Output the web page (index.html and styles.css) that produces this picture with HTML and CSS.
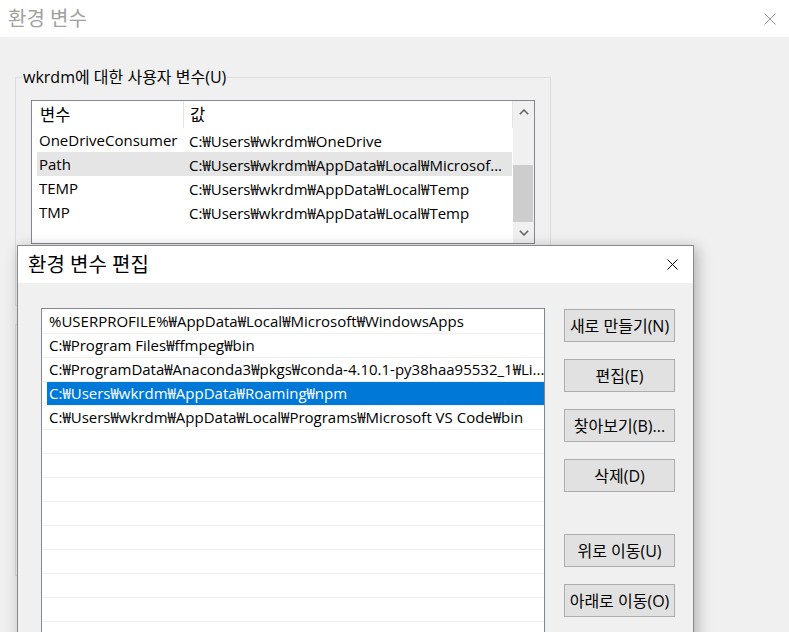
FILE: index.html
```html
<!DOCTYPE html>
<html lang="ko">
<head>
<meta charset="utf-8">
<title>환경 변수</title>
<link rel="stylesheet" href="styles.css">
</head>
<body>
<div class="bg-window">
  <div class="bg-titlebar">
    <span class="bg-title">환경 변수</span>
    <span class="close-icon">
      <svg width="12" height="12" viewBox="0 0 12 12"><path d="M0.5 0.5L11.5 11.5M11.5 0.5L0.5 11.5" stroke="#9a9a9a" stroke-width="1" fill="none"/></svg>
    </span>
  </div>
  <div class="bg-body">
    <fieldset class="group user-group">
      <legend>wkrdm에 대한 사용자 변수(U)</legend>
      <div class="lv">
        <div class="lv-main">
          <div class="lv-header">
            <div class="hcol1">변수</div>
            <div class="hcol2">값</div>
          </div>
          <div class="lv-row"><div class="c1">OneDriveConsumer</div><div class="c2">C:₩Users₩wkrdm₩OneDrive</div></div>
          <div class="lv-row hl"><div class="c1">Path</div><div class="c2">C:₩Users₩wkrdm₩AppData₩Local₩Microsof...</div></div>
          <div class="lv-row"><div class="c1">TEMP</div><div class="c2">C:₩Users₩wkrdm₩AppData₩Local₩Temp</div></div>
          <div class="lv-row"><div class="c1">TMP</div><div class="c2">C:₩Users₩wkrdm₩AppData₩Local₩Temp</div></div>
        </div>
        <div class="vscroll">
          <div class="sb-btn"><svg width="10" height="6" viewBox="0 0 10 6"><path d="M0.8 5.2L5 1L9.2 5.2" fill="none" stroke="#606060" stroke-width="1.5"/></svg></div>
          <div class="sb-track"><div class="sb-thumb"></div></div>
          <div class="sb-btn"><svg width="10" height="6" viewBox="0 0 10 6"><path d="M0.8 0.8L5 5L9.2 0.8" fill="none" stroke="#606060" stroke-width="1.5"/></svg></div>
        </div>
      </div>
    </fieldset>
    <fieldset class="group sys-group">
      <legend>시스템 변수(S)</legend>
    </fieldset>
  </div>
</div>

<div class="dialog">
  <div class="dlg-titlebar">
    <span class="dlg-title">환경 변수 편집</span>
    <span class="close-icon">
      <svg width="11" height="11" viewBox="0 0 11 11"><path d="M0.5 0.5L10.5 10.5M10.5 0.5L0.5 10.5" stroke="#000" stroke-width="1" fill="none"/></svg>
    </span>
  </div>
  <div class="dlg-body">
    <div class="edit-list">
      <div class="er"><div class="er-text">%USERPROFILE%₩AppData₩Local₩Microsoft₩WindowsApps</div></div>
      <div class="er"><div class="er-text">C:₩Program Files₩ffmpeg₩bin</div></div>
      <div class="er"><div class="er-text">C:₩ProgramData₩Anaconda3₩pkgs₩conda-4.10.1-py38haa95532_1₩Li...</div></div>
      <div class="er sel"><div class="er-text">C:₩Users₩wkrdm₩AppData₩Roaming₩npm</div></div>
      <div class="er"><div class="er-text">C:₩Users₩wkrdm₩AppData₩Local₩Programs₩Microsoft VS Code₩bin</div></div>
      <div class="er"><div class="er-text"></div></div>
      <div class="er"><div class="er-text"></div></div>
      <div class="er"><div class="er-text"></div></div>
      <div class="er"><div class="er-text"></div></div>
      <div class="er"><div class="er-text"></div></div>
      <div class="er"><div class="er-text"></div></div>
      <div class="er"><div class="er-text"></div></div>
      <div class="er"><div class="er-text"></div></div>
      <div class="er"><div class="er-text"></div></div>
      <div class="er"><div class="er-text"></div></div>
    </div>
    <div class="btn-col">
      <button class="btn">새로 만들기(N)</button>
      <button class="btn">편집(E)</button>
      <button class="btn">찾아보기(B)...</button>
      <button class="btn">삭제(D)</button>
      <button class="btn btn-sep">위로 이동(U)</button>
      <button class="btn">아래로 이동(O)</button>
    </div>
  </div>
</div>
</body>
</html>
```
FILE: styles.css
```css
html, body {
  margin: 0;
  padding: 0;
}
body {
  width: 789px;
  height: 632px;
  overflow: hidden;
  position: relative;
  background: #f0f0f0;
  font-family: "Open Sans", "Noto Sans CJK KR", sans-serif;
  font-size: 15px;
  color: #000;
}

/* background window */
.bg-titlebar {
  height: 37px;
  background: #fff;
  display: flex;
  align-items: center;
  justify-content: space-between;
  padding: 0 13px 0 8px;
}
.bg-title {
  font-size: 20px;
  color: #a0a0a0;
  line-height: 1;
}
.close-icon {
  display: flex;
}
.bg-body {
  padding: 30px 0 0 15px;
}
.group {
  margin: 0;
  width: 536px;
  box-sizing: border-box;
  border: 1px solid #dcdcdc;
  padding: 13px 0 0 15px;
  min-width: 0;
}
.group legend {
  padding: 0 1px;
  margin-left: -9px;
  font-size: 16px;
  line-height: 20px;
}
.user-group {
  height: 239px;
}
.sys-group {
  margin-top: 8px;
  height: 262px;
}

.lv {
  width: 504px;
  height: 144px;
  box-sizing: border-box;
  border: 1px solid #828790;
  background: #fff;
  display: flex;
}
.lv-main {
  flex: 1;
  display: flex;
  flex-direction: column;
}
.lv-header {
  height: 27px;
  display: flex;
}
.hcol1, .hcol2 {
  box-sizing: border-box;
  border-right: 1px solid #e5e5e5;
  line-height: 27px;
  font-size: 16.5px;
}
.hcol1 {
  width: 152px;
  padding-left: 8px;
}
.hcol2 {
  width: 329px;
  padding-left: 6px;
}
.lv-row {
  height: 24px;
  margin: 0 1px 0 5px;
  display: flex;
  align-items: center;
  white-space: nowrap;
}
.lv-row.hl {
  background: #e5e5e5;
}
.c1 {
  width: 146px;
  box-sizing: border-box;
  padding-left: 2px;
}
.c2 {
  padding-left: 6px;
  overflow: hidden;
}
.vscroll {
  width: 21px;
  background: #f0f0f0;
  display: flex;
  flex-direction: column;
}
.sb-btn {
  height: 21px;
  display: flex;
  align-items: center;
  justify-content: center;
}
.sb-track {
  flex: 1;
  display: flex;
  flex-direction: column;
  justify-content: flex-end;
}
.sb-thumb {
  height: 57px;
  margin-right: 1px;
  background: #cdcdcd;
}

/* foreground dialog (window over the desktop) */
.dialog {
  position: absolute;
  left: 17px;
  top: 245px;
  width: 677px;
  height: 420px;
  box-sizing: border-box;
  border: 1px solid #8a8a8a;
  background: #f0f0f0;
  box-shadow: 3px 3px 14px rgba(0, 0, 0, 0.28);
  display: flex;
  flex-direction: column;
}
.dlg-titlebar {
  height: 37px;
  flex: none;
  background: #fff;
  display: flex;
  align-items: center;
  justify-content: space-between;
  padding: 0 15px 0 10px;
}
.dlg-title {
  font-size: 20px;
  line-height: 1;
}
.dlg-body {
  display: flex;
  align-items: flex-start;
  gap: 19px;
  padding: 25px 18px 0 23px;
}
.edit-list {
  width: 504px;
  height: 360px;
  flex: none;
  box-sizing: border-box;
  border: 1px solid #828790;
  background: #fff;
  padding-top: 1px;
}
.er {
  height: 24px;
  box-sizing: border-box;
  border-bottom: 1px solid #efefef;
  display: flex;
}
.er-text {
  flex: 1;
  margin-left: 5px;
  padding-left: 2px;
  line-height: 23px;
  white-space: nowrap;
  overflow: hidden;
}
.er.sel .er-text {
  background: #0078d7;
  color: #fff;
}
.btn-col {
  display: flex;
  flex-direction: column;
  gap: 17px;
  margin-top: 1px;
}
.btn {
  width: 111px;
  height: 33px;
  box-sizing: border-box;
  margin: 0;
  padding: 0;
  background: #e1e1e1;
  border: 1px solid #adadad;
  font-family: inherit;
  font-size: 16px;
  line-height: 1;
  color: #000;
}
.btn-sep {
  margin-top: 25px;
}
```
